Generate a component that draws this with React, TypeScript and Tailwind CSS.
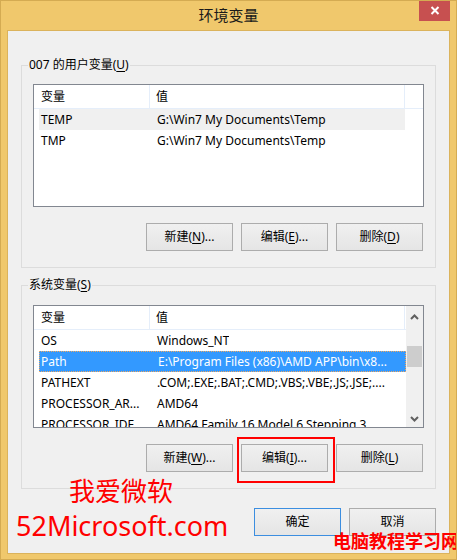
import React from 'react';

const font = "font-['Noto_Sans','Noto_Sans_CJK_SC',sans-serif]";
const btnBase =
  'w-[87px] h-[28px] flex items-center justify-center text-[12px] text-black bg-linear-to-b from-[#f0f0f0] to-[#e5e5e5] border';

const Mn = ({ k }: { k: string }) => <span className="underline underline-offset-2">{k}</span>;

const Btn = ({ children, primary = false }: { children: React.ReactNode; primary?: boolean }) => (
  <div className={`${btnBase} ${primary ? 'border-[#3c8ee0]' : 'border-[#acacac]'}`}>{children}</div>
);

type Row = { name: string; value: string; state?: 'soft' | 'selected' };

const Chevron = ({ up }: { up?: boolean }) => (
  <svg width="9" height="6" viewBox="0 0 9 6" className="block">
    <path
      d={up ? 'M1 5 L4.5 1.5 L8 5' : 'M1 1 L4.5 4.5 L8 1'}
      fill="none"
      stroke="#606060"
      strokeWidth="2"
    />
  </svg>
);

const VarList = ({ rows, scroll = false }: { rows: Row[]; scroll?: boolean }) => (
  <div className="h-[123px] border border-[#828790] bg-white flex overflow-hidden">
    <div className="flex-1 flex flex-col min-w-0">
      <div className="h-[24px] shrink-0 flex border-b border-[#e5eefa] text-[12px] text-black">
        <div className="w-[116px] pl-[7px] flex items-center border-r border-[#e5eefa]">变量</div>
        <div className="w-[255px] pl-[6px] flex items-center border-r border-[#e5eefa]">值</div>
      </div>
      {rows.map((r) => {
        const bg =
          r.state === 'selected'
            ? 'bg-[#3399ff] text-white border border-dotted border-[#f0a860]'
            : r.state === 'soft'
              ? 'bg-[#f0f0f0] text-black'
              : 'text-black';
        return (
          <div
            key={r.name}
            className={`ml-[5px] ${scroll ? 'w-[367px]' : 'w-[366px]'} h-[21px] shrink-0 flex items-center text-[12px] whitespace-nowrap ${bg}`}
          >
            <div className={`w-[116px] overflow-hidden ${r.state === 'selected' ? 'pl-[1px]' : 'pl-[2px]'}`}>{r.name}</div>
            <div className="pl-[2px] overflow-hidden">{r.value}</div>
          </div>
        );
      })}
    </div>
    {scroll && (
      <div className="w-[17px] bg-[#f0f0f0] flex flex-col items-center">
        <div className="h-[17px] flex items-center justify-center mt-[2px]">
          <Chevron up />
        </div>
        <div className="w-[15px] h-[21px] bg-[#cdcdcd] mt-[21px]" />
        <div className="flex-1" />
        <div className="h-[17px] flex items-center justify-center">
          <Chevron />
        </div>
      </div>
    )}
  </div>
);

const Group = ({
  legend,
  rows,
  scroll,
  buttons,
  className = '',
}: {
  legend: React.ReactNode;
  rows: Row[];
  scroll?: boolean;
  buttons: React.ReactNode[];
  className?: string;
}) => (
  <fieldset className={`mx-[13px] border border-[#dcdcdc] px-[11px] pb-[16px] ${className}`}>
    <legend className="-ml-[5px] px-[1px] text-[12px] leading-[16px] text-black">{legend}</legend>
    <VarList rows={rows} scroll={scroll} />
    <div className="mt-[16px] flex justify-end gap-[8px] pr-[1px]">
      {buttons.map((b, i) => (
        <Btn key={i}>{b}</Btn>
      ))}
    </div>
  </fieldset>
);

export default function App() {
  return (
    <div className={`relative w-[457px] h-[560px] bg-[#f0c86c] border border-[#d4ab52] flex flex-col overflow-hidden ${font}`}>
      <div className="h-[29px] shrink-0 flex items-center justify-center text-[15px] text-[#1a1a1a]">
        环境变量
      </div>
      <div className="absolute -top-px right-[6px] w-[31px] h-[21px] bg-[#c75050] flex items-center justify-center">
        <svg width="10" height="9" viewBox="0 0 10 9">
          <path d="M1.5 1 L8.5 8 M8.5 1 L1.5 8" stroke="white" strokeWidth="2" />
        </svg>
      </div>

      <div className="mx-[6px] h-[524px] shrink-0 bg-[#f0f0f0] border border-[#dbb35c] flex flex-col">
        <Group
          className="mt-[26px] pt-[11px]"
          legend={
            <>
              007 的用户变量(<Mn k="U" />)
            </>
          }
          rows={[
            { name: 'TEMP', value: 'G:\\Win7 My Documents\\Temp', state: 'soft' },
            { name: 'TMP', value: 'G:\\Win7 My Documents\\Temp' },
          ]}
          buttons={[
            <>
              新建(<Mn k="N" />)...
            </>,
            <>
              编辑(<Mn k="E" />)...
            </>,
            <>
              删除(<Mn k="D" />)
            </>,
          ]}
        />
        <Group
          className="mt-[9px] pt-[12px]"
          scroll
          legend={
            <>
              系统变量(<Mn k="S" />)
            </>
          }
          rows={[
            { name: 'OS', value: 'Windows_NT' },
            { name: 'Path', value: 'E:\\Program Files (x86)\\AMD APP\\bin\\x8...', state: 'selected' },
            { name: 'PATHEXT', value: '.COM;.EXE;.BAT;.CMD;.VBS;.VBE;.JS;.JSE;....' },
            { name: 'PROCESSOR_AR...', value: 'AMD64' },
            { name: 'PROCESSOR_IDE...', value: 'AMD64 Family 16 Model 6 Stepping 3, ...' },
          ]}
          buttons={[
            <>
              新建(<Mn k="W" />)...
            </>,
            <>
              编辑(<Mn k="I" />)...
            </>,
            <>
              删除(<Mn k="L" />)
            </>,
          ]}
        />
        <div className="mt-[19px] mr-[13px] flex justify-end gap-[8px]">
          <Btn primary>确定</Btn>
          <Btn>取消</Btn>
        </div>
      </div>

      {/* watermark overlays */}
      <div className="absolute left-[236px] top-[436px] w-[98px] h-[46px] border-2 border-[#ff0000]" />
      <div className="absolute left-[68px] top-[475px] text-[26px] leading-[30px] text-[#ff0000]">我爱微软</div>
      <div className="absolute left-[15px] top-[508px] text-[27px] leading-[33px] text-[#ff0000]">52Microsoft.com</div>
      <div className="absolute left-[332px] top-[528px] text-[18px] leading-[24px] font-bold text-[#ff0000] whitespace-nowrap">
        电脑教程学习网
      </div>
    </div>
  );
}
